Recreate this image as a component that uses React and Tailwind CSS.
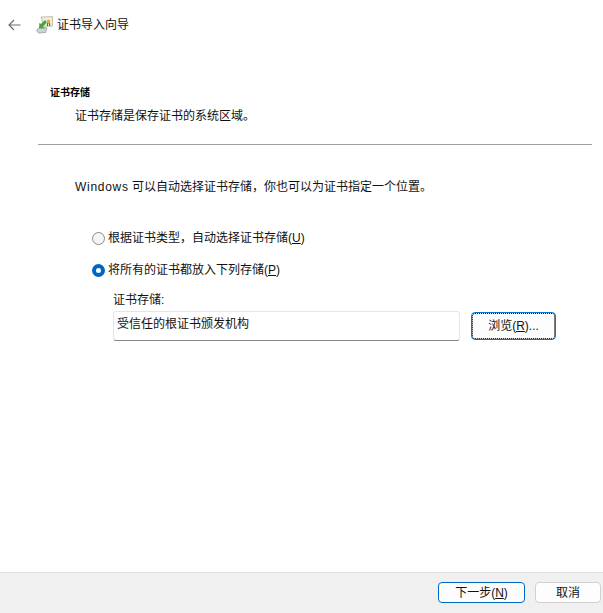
import React from "react";

const FONT = "font-['Liberation_Sans','Noto_Sans_CJK_SC',sans-serif]";

const CertIcon = () => (
  <svg width="18" height="18" viewBox="0 0 18 18" className="shrink-0">
    <path d="M5 1 L16.5 0.5 L16.5 10 L8 11 Z" fill="#efeadb" stroke="#bdb69e" strokeWidth="0.8" />
    <circle cx="12.5" cy="5.5" r="1.7" fill="#e0a92e" />
    <path d="M11.7 7 L11.4 10 M13.4 7 L13.7 10" stroke="#3b62b5" strokeWidth="1.1" />
    <path d="M0.5 14 L3.5 11.5 L11 12 L9.5 16.5 L2.5 17 Z" fill="#cfd3d6" stroke="#8f9498" strokeWidth="0.7" />
    <path d="M9 4 L4.8 8 L3.4 6.8 L3 12.5 L8.6 12.5 L7 10.8 L10.8 6.4 Z" fill="#46a83a" />
  </svg>
);

const Radio = ({ checked, label, hotkey }) => (
  <label className="flex items-center gap-[2px] h-[16px]">
    {checked ? (
      <span className="w-[13px] h-[13px] rounded-full border-[4px] border-[#0067c0] bg-white shrink-0" />
    ) : (
      <span className="w-[13px] h-[13px] rounded-full border border-[#8a8a8a] bg-[#f5f5f5] shrink-0" />
    )}
    <span className="ml-[1px]">
      {label}(<span className="underline">{hotkey}</span>)
    </span>
  </label>
);

export default function App() {
  return (
    <div className={`${FONT} flex flex-col w-[603px] h-[613px] bg-white text-[12px] leading-[16px] text-[#111111]`}>
      <div className="flex items-center h-[50px] pl-[8px]">
        <svg width="13" height="12" viewBox="0 0 13 12" fill="none" stroke="#6e6e6e" strokeWidth="1.2">
          <path d="M12.5 6 H1 M6 1 L1 6 L6 11" />
        </svg>
        <span className="ml-[15px]"><CertIcon /></span>
        <span className="ml-[3px]">证书导入向导</span>
      </div>

      <div className="pl-[50px] mt-[36px] text-[10px] leading-[14px] font-bold text-black">证书存储</div>
      <div className="pl-[75px] mt-[8px]">证书存储是保存证书的系统区域。</div>
      <div className="ml-[38px] mr-[11px] mt-[20px] h-px bg-[#a0a0a0]" />

      <div className="pl-[75px] mt-[34px]">
        <span className="tracking-[0.7px]">Windows</span> 可以自动选择证书存储，你也可以为证书指定一个位置。
      </div>

      <div className="pl-[92px] mt-[35px] flex flex-col gap-[16px]">
        <Radio label="根据证书类型，自动选择证书存储" hotkey="U" />
        <Radio checked label="将所有的证书都放入下列存储" hotkey="P" />
      </div>

      <div className="pl-[113px] mt-[14px]">证书存储:</div>
      <div className="flex pl-[113px] mt-[3px] items-start">
        <div className="w-[347px] h-[30px] flex items-center pl-[3px] pb-[5px] rounded-[3px] border border-[#e5e5e5] border-b-[#868686] bg-white">
          受信任的根证书颁发机构
        </div>
        <button className="ml-[11px] mt-[1px] w-[85px] h-[28px] flex items-center justify-center rounded-[4px] border border-[#0078d4] outline-1 outline-dotted outline-black -outline-offset-2 bg-[#fdfdfd]">
          浏览(<span className="underline">R</span>)...
        </button>
      </div>

      <div className="mt-auto h-[41px] flex items-center justify-end pr-[2px] gap-[10px] pb-[1px] bg-[#f0f0f0] border-t border-[#dfdfdf]">
        <button className="w-[87px] h-[21px] flex items-center justify-center rounded-[4px] border border-[#0067c0] bg-[#fdfdfd]">
          下一步(<span className="underline">N</span>)
        </button>
        <button className="w-[66px] h-[21px] flex items-center justify-center rounded-[4px] border border-[#d0d0d0] bg-[#fdfdfd]">
          取消
        </button>
      </div>
    </div>
  );
}
